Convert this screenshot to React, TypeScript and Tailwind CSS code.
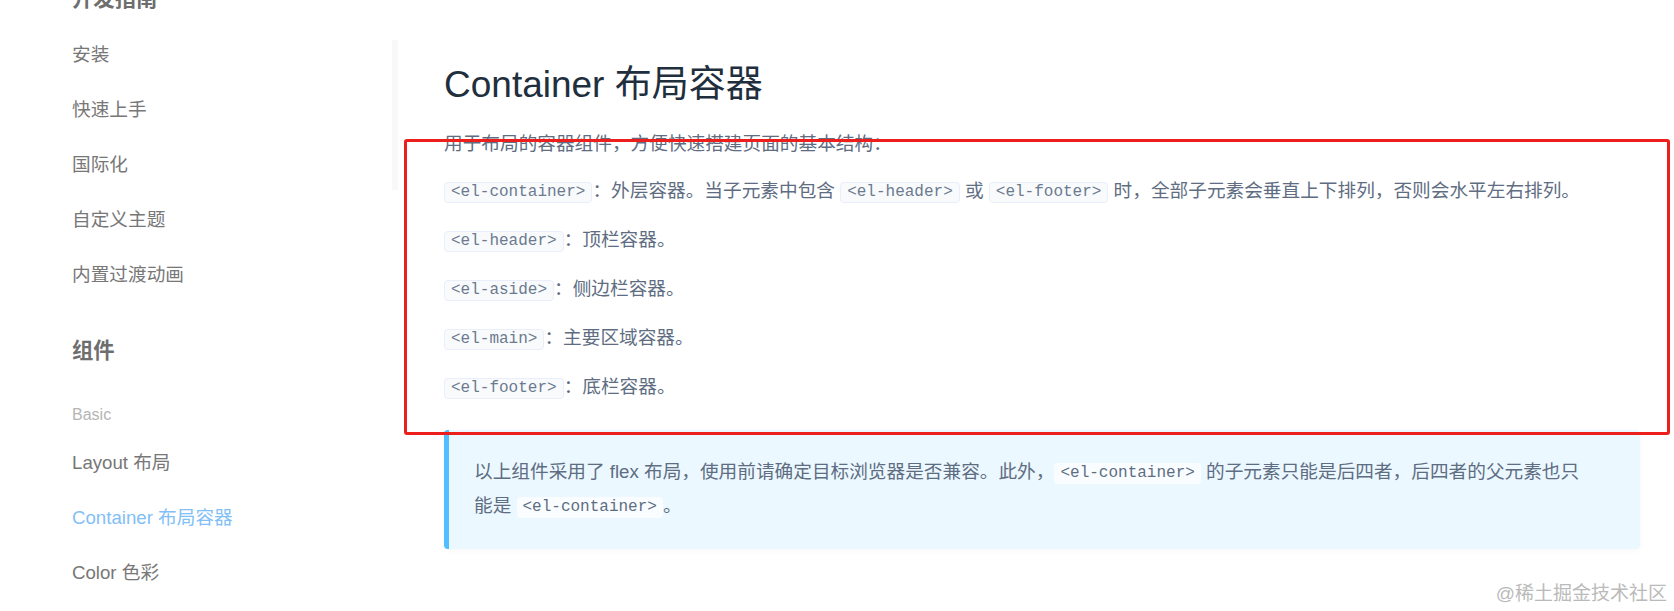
import type { ReactNode } from "react"

const sans = "font-['Liberation_Sans','Noto_Sans_CJK_SC',sans-serif]"

function Code({ children, tip }: { children: ReactNode; tip?: boolean }) {
  return (
    <code
      className={
        tip
          ? "inline-block h-[21px] px-[6px] leading-[20px] rounded-[4px] bg-white/70 font-['Liberation_Mono',monospace] text-[16px] text-[#5e6d82] align-[1px]"
          : "inline-block h-[21px] px-[6px] leading-[19px] rounded-[4px] border border-[#eaeefb] bg-[#f9fafc] font-['Liberation_Mono',monospace] text-[16px] text-[#6b7a8f] align-[1px]"
      }
    >
      {children}
    </code>
  )
}

export default function App() {
  return (
    <div className={`relative h-[611px] w-[1674px] overflow-hidden bg-white ${sans}`}>
      <div className="flex h-full">
        {/* Sidebar */}
        <aside className="flex w-[400px] shrink-0">
          <nav className="flex-1 pl-[72px] -mt-[28px] text-[18.67px] text-[#777]">
            <div className="h-[55px] leading-[55px] text-[21.33px] font-bold text-[#6e6e6e]">开发指南</div>
            <div className="h-[55px] leading-[55px]">安装</div>
            <div className="h-[55px] leading-[55px]">快速上手</div>
            <div className="h-[55px] leading-[55px]">国际化</div>
            <div className="h-[55px] leading-[55px]">自定义主题</div>
            <div className="h-[55px] leading-[55px]">内置过渡动画</div>
            <div className="mt-[22px] h-[55px] leading-[55px] text-[21.33px] font-bold text-[#6e6e6e]">组件</div>
            <div className="mt-[21px] h-[30px] leading-[30px] text-[16px] text-[#b5b5b5]">Basic</div>
            <div className="mt-[5px] h-[55px] leading-[55px]">Layout 布局</div>
            <div className="h-[55px] leading-[55px] text-[#82bff6]">Container 布局容器</div>
            <div className="h-[55px] leading-[55px]">Color 色彩</div>
          </nav>
          <div className="mr-[2px] mt-[40px] h-[150px] w-[6px] bg-[#f8f8f9]" />
        </aside>

        {/* Main */}
        <main className="flex-1 pl-[44px] pr-[34px] text-[18.67px] text-[#5e6d82]">
          <h2 className="mt-[63px] h-[44px] text-[37px] leading-[44px] text-[#1f2f3d]">Container 布局容器</h2>
          <p className="mt-[23px] leading-[28px]">用于布局的容器组件，方便快速搭建页面的基本结构：</p>
          <div className="mt-[19px] flex flex-col gap-[21px]">
            <p className="leading-[28px]">
              <Code>{"<el-container>"}</Code>：外层容器。当子元素中包含 <Code>{"<el-header>"}</Code> 或{" "}
              <Code>{"<el-footer>"}</Code> 时，全部子元素会垂直上下排列，否则会水平左右排列。
            </p>
            <p className="leading-[28px]">
              <Code>{"<el-header>"}</Code>：顶栏容器。
            </p>
            <p className="leading-[28px]">
              <Code>{"<el-aside>"}</Code>：侧边栏容器。
            </p>
            <p className="leading-[28px]">
              <Code>{"<el-main>"}</Code>：主要区域容器。
            </p>
            <p className="leading-[28px]">
              <Code>{"<el-footer>"}</Code>：底栏容器。
            </p>
          </div>

          <div className="mt-[29px] h-[119px] rounded-[4px] border-l-[5px] border-[#50bfff] bg-[#ecf8ff] pl-[25px] pr-[50px] pt-[25px] shadow-[0_2px_6px_rgba(0,0,0,0.03)]">
            <p className="leading-[34px]">
              以上组件采用了 flex 布局，使用前请确定目标浏览器是否兼容。此外，<Code tip>{"<el-container>"}</Code>{" "}
              的子元素只能是后四者，后四者的父元素也只能是 <Code tip>{"<el-container>"}</Code>。
            </p>
          </div>
        </main>
      </div>

      {/* Annotation rectangle */}
      <div className="pointer-events-none absolute left-[404px] top-[139px] h-[296px] w-[1266px] rounded-[3px] border-[3px] border-[#ec1f1c]" />

      {/* Watermark */}
      <div className="absolute bottom-[3px] right-[7px] text-[19px] text-[#bababa]">@稀土掘金技术社区</div>
    </div>
  )
}
